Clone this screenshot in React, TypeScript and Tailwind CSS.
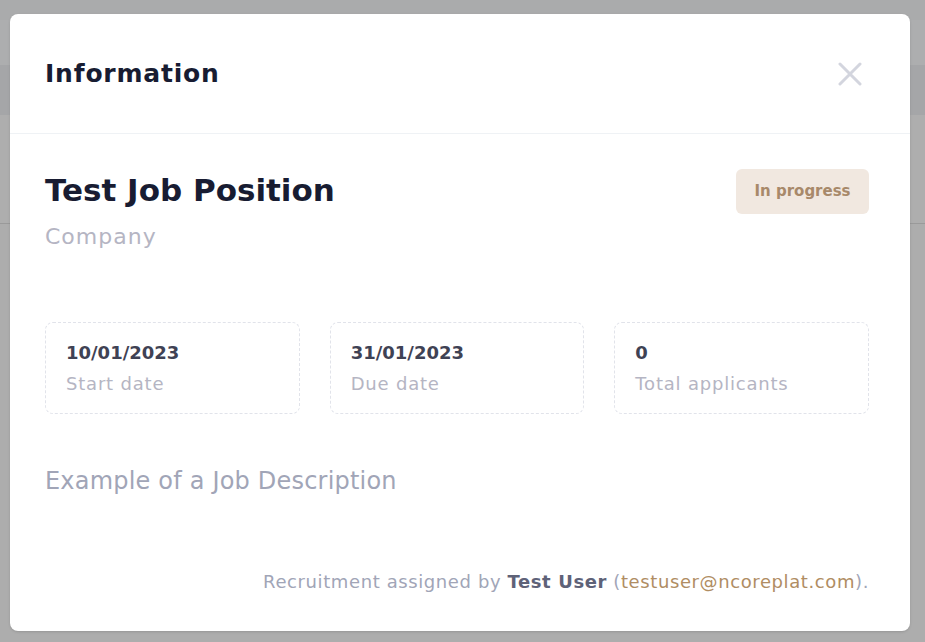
const stats = [
  { value: '10/01/2023', label: 'Start date' },
  { value: '31/01/2023', label: 'Due date' },
  { value: '0', label: 'Total applicants' },
];

export default function App() {
  return (
    <div className="relative h-[642px] w-full overflow-hidden bg-[#adadad]" style={{ fontFamily: '"DejaVu Sans", "Noto Sans", sans-serif' }}>
      {/* page behind the backdrop */}
      <div className="h-[20px] bg-[#aaabac]" />
      <div className="h-[45px] bg-[#adaeaf]" />
      <div className="h-[50px] bg-[#a5a6a8]" />
      <div className="h-[109px] border-b border-[#9a9a9a] bg-[#aeaeae]" />

      {/* modal */}
      <div className="absolute left-[10px] top-[14px] w-[900px] h-[617px] rounded-lg bg-white shadow-sm">
        <div className="flex h-[120px] items-center justify-between border-b border-[#eff2f5] px-[35px]">
          <h2 className="text-[25px] font-semibold tracking-[0.8px] text-[#181c32]">Information</h2>
          <svg className="mr-[13px] h-[24px] w-[24px] text-[#d3d5de]" viewBox="0 0 24 24" fill="none" stroke="currentColor" strokeWidth={3} strokeLinecap="round">
            <path d="M2 2L22 22M22 2L2 22" />
          </svg>
        </div>

        <div className="px-[35px] pt-[36px]">
          <div className="flex items-start justify-between">
            <div>
              <h1 className="text-[31px] font-semibold leading-[40px] text-[#181c32]">Test Job Position</h1>
              <p className="mt-[13px] text-[22px] leading-[28px] tracking-[1px] text-[#b5b5c3]">Company</p>
            </div>
            <span className="mr-[6px] mt-[-1px] flex h-[45px] w-[133px] items-center justify-center rounded-md bg-[#f1e8e0] text-[15px] font-semibold text-[#a8896a]">
              In progress
            </span>
          </div>

          <div className="mt-[71px] mr-[6px] grid grid-cols-3 gap-[30px]">
            {stats.map((s) => (
              <div key={s.label} className="h-[92px] rounded-lg border border-dashed border-[#e1e3ea] px-[20px] pt-[16px]">
                <div className="text-[18px] font-semibold leading-[28px] text-[#3f4254]">{s.value}</div>
                <div className="mt-[4px] text-[18px] leading-[26px] tracking-[0.8px] text-[#b5b5c3]">{s.label}</div>
              </div>
            ))}
          </div>

          <p className="mt-[52px] text-[24px] leading-[30px] tracking-[0.2px] text-[#a1a5b7]">Example of a Job Description</p>

          <p className="mt-[73px] mr-[6px] text-right text-[18px] leading-[26px] tracking-[0.6px] text-[#a1a5b7]">
            Recruitment assigned by <span className="font-semibold text-[#5e6278]">Test User</span> (
            <span className="text-[#b08d63]">testuser@ncoreplat.com</span>).
          </p>
        </div>
      </div>
    </div>
  );
}
